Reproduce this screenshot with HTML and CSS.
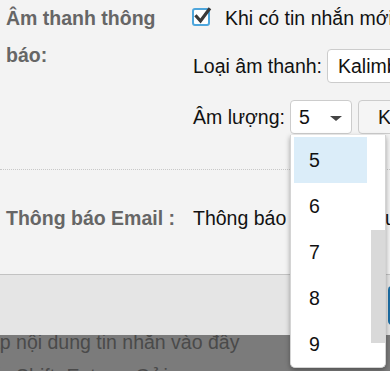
FILE: index.html
```html
<!DOCTYPE html>
<html>
<head>
<meta charset="UTF-8">
<meta name="viewport" content="width=device-width, initial-scale=1">
<link rel="stylesheet" href="styles.css">
</head>
<body>

<div class="modal">
	<div class="modal-body">
		<div class="form-row sound-row">
			<div class="row-label">Âm thanh thông báo:</div>
			<div class="row-content">
				<label class="check-line">
					<svg class="check-icon" width="22" height="21" viewBox="0 0 22 21">
						<rect x="1" y="3" width="16" height="16" rx="2" fill="#fff" stroke="#4ea6dc" stroke-width="2"/>
						<path d="M4.5 10.5 L8.5 15 L17 3.5" fill="none" stroke="#3a3a3a" stroke-width="3.2" stroke-linecap="square"/>
					</svg>
					<span>Khi có tin nhắn mới</span>
				</label>
				<div class="field-line sound-line">
					<span class="field-name">Loại âm thanh:</span>
					<div class="select sound-select">Kalimba</div>
				</div>
				<div class="field-line volume-line">
					<span class="field-name">Âm lượng:</span>
					<div class="select-wrap">
						<div class="select volume-select">5<span class="caret"></span></div>
						<ul class="dropdown">
							<li class="active">5</li>
							<li>6</li>
							<li>7</li>
							<li>8</li>
							<li>9</li>
						</ul>
						<div class="scroll-thumb"></div>
					</div>
					<button class="test-btn">Kiểm tra</button>
				</div>
			</div>
		</div>
		<div class="form-row email-row">
			<div class="row-label">Thông báo Email :</div>
			<div class="row-content">Thông báo khi có tin qua email</div>
		</div>
	</div>
	<div class="modal-footer">
		<button class="save-btn">Lưu</button>
	</div>
</div>

<div class="chat-input">
	Nhập nội dung tin nhắn vào đây<br>
	Nhấn Shift+Enter = Gửi
</div>

</body>
</html>
```

FILE: styles.css
```css
* {
	box-sizing: border-box;
}

body {
	margin: 0;
	background-color: #7b7b7b;
	font-family: "Liberation Sans", Arial, sans-serif;
	font-size: 19.5px;
	overflow: hidden;
}

.modal {
	position: relative;
	z-index: 1;
	width: 700px;
	background-color: #f3f3f3;
}

.form-row {
	display: flex;
}

.sound-row {
	padding-bottom: 35px;
	border-bottom: 1px dotted #c8c8c8;
}

.email-row {
	padding-top: 30px;
	padding-bottom: 37px;
}

.row-label {
	flex: 0 0 193px;
	padding: 0 4px 0 6px;
	font-weight: bold;
	color: #666;
	line-height: 37px;
}

.row-content {
	flex: 1;
	color: #111;
	line-height: 37px;
	white-space: nowrap;
}

.check-line {
	display: flex;
	align-items: center;
	height: 37px;
}

.check-icon {
	margin: -4px 11px 0 -1px;
}

.field-line {
	display: flex;
	align-items: center;
	height: 34px;
	line-height: normal;
}

.sound-line {
	margin-top: 12px;
}

.volume-line {
	margin-top: 17px;
}

.field-name {
	margin-right: 5px;
}

.select {
	height: 34px;
	line-height: 32px;
	border: 1px solid #ccc;
	border-radius: 4px;
	background-color: #fff;
	padding: 0 10px;
}

.sound-select {
	width: 200px;
}

.select-wrap {
	position: relative;
	z-index: 2;
}

.volume-select {
	width: 62px;
	padding-left: 8px;
	position: relative;
}

.caret {
	position: absolute;
	right: 9px;
	top: 15px;
	border-left: 6px solid transparent;
	border-right: 6px solid transparent;
	border-top: 5px solid #444;
}

.test-btn {
	margin-left: 6px;
	height: 34px;
	padding: 0 18px 0 19px;
	border: 1px solid #ccc;
	border-radius: 4px;
	background-color: #f5f5f5;
	font-family: inherit;
	font-size: 19.5px;
	color: #111;
}

.dropdown {
	position: absolute;
	top: 35px;
	left: 0;
	width: 96px;
	height: 233px;
	margin: 0;
	padding: 2px 18px 0 3px;
	list-style-type: none;
	background-color: #fff;
	border: 1px solid #d4d4d4;
	border-top: none;
	border-radius: 0 0 5px 5px;
	box-shadow: 0 2px 5px rgba(0, 0, 0, 0.35);
	overflow: hidden;
}

.dropdown li {
	height: 46px;
	line-height: 46px;
	padding-left: 15px;
	color: #111;
}

.dropdown li.active {
	background-color: #dbedf9;
}

.scroll-thumb {
	position: absolute;
	left: 81px;
	top: 130px;
	width: 14px;
	height: 113px;
	background-color: #d9d9d9;
}

.modal-footer {
	height: 61px;
	border-top: 1px solid #c2c2c2;
	background-color: #e5e5e5;
	padding: 11px 0 0 388px;
}

.save-btn {
	height: 39px;
	width: 80px;
	border: none;
	border-radius: 4px;
	background-color: #1c6ea4;
	color: #fff;
	font-family: inherit;
	font-size: 19.5px;
}

.chat-input {
	margin-top: -10px;
	margin-left: -36px;
	color: #4a4a4a;
	line-height: 34px;
}
```
